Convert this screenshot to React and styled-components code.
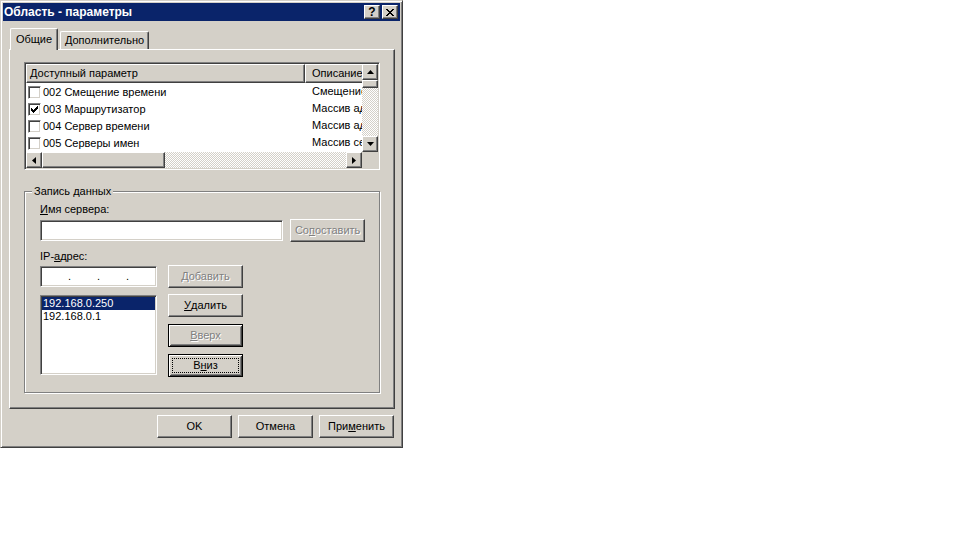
import React from "react";
import styled, { createGlobalStyle, css } from "styled-components";

const FACE = "#d4d0c8";

const GlobalStyle = createGlobalStyle`
  html, body {
    margin: 0;
    padding: 0;
    background: #fff;
  }
  body {
    font: 11px/13px "Liberation Sans", Arial, sans-serif;
    color: #000;
  }
  * {
    box-sizing: border-box;
  }
`;

// classic 3d edges
const raised = css`
  border: 1px solid;
  border-color: #fff #404040 #404040 #fff;
  box-shadow: inset -1px -1px #808080, inset 1px 1px ${FACE};
`;

const sunken = css`
  border: 1px solid;
  border-color: #808080 #fff #fff #808080;
  box-shadow: inset 1px 1px #404040, inset -1px -1px ${FACE};
`;

const Window = styled.div`
  width: 403px;
  height: 448px;
  padding: 2px;
  background: ${FACE};
  border: 1px solid;
  border-color: ${FACE} #404040 #404040 ${FACE};
  box-shadow: inset 1px 1px #fff, inset -1px -1px #808080;
  display: flex;
  flex-direction: column;
`;

const TitleBar = styled.div`
  height: 18px;
  background: #0a246a;
  display: flex;
  align-items: center;
  padding: 0 2px 0 1px;
`;

const TitleText = styled.div`
  flex: 1;
  color: #fff;
  font-weight: bold;
  font-size: 12px;
  white-space: nowrap;
`;

const CaptionButtons = styled.div`
  display: flex;
  gap: 2px;
`;

const CaptionButton = styled.div`
  width: 16px;
  height: 14px;
  background: ${FACE};
  ${raised};
  display: flex;
  align-items: center;
  justify-content: center;
  font-weight: bold;
  font-size: 12px;
  line-height: 12px;
`;

const Body = styled.div`
  flex: 1;
  padding: 7px 5px 0 6px;
  display: flex;
  flex-direction: column;
`;

const TabStrip = styled.div`
  display: flex;
  align-items: flex-end;
  height: 22px;
  margin-bottom: -1px;
  position: relative;
  z-index: 1;
`;

const Tab = styled.div`
  width: ${(p) => p.$w}px;
  height: ${(p) => (p.$active ? 22 : 18)}px;
  margin: 0 0 ${(p) => (p.$active ? 0 : 1)}px ${(p) => p.$ml}px;
  padding-bottom: ${(p) => (p.$active ? 1 : 0)}px;
  background: ${FACE};
  border-top: 1px solid #fff;
  border-left: 1px solid #fff;
  border-right: 1px solid #404040;
  border-radius: 2px 2px 0 0;
  box-shadow: inset -1px 0 #808080;
  display: flex;
  align-items: center;
  justify-content: center;
  white-space: nowrap;
`;

const Panel = styled.div`
  width: 386px;
  height: 360px;
  border: 1px solid;
  border-color: #fff #404040 #404040 #fff;
  box-shadow: inset -1px -1px #808080;
  padding: 12px 14px 0;
`;

const ListView = styled.div`
  width: 356px;
  height: 108px;
  ${sunken};
  padding: 1px;
  background: ${FACE};
  display: grid;
  grid-template-columns: 336px 16px;
  grid-template-rows: 88px 16px;
`;

const ListContent = styled.div`
  background: #fff;
  overflow: hidden;
  min-width: 0;
`;

const HeaderRow = styled.div`
  display: flex;
  height: 19px;
`;

const HeaderCell = styled.div`
  flex: 0 0 ${(p) => p.$w}px;
  ${raised};
  background: ${FACE};
  padding-left: ${(p) => p.$pad}px;
  line-height: 16px;
  white-space: nowrap;
  overflow: hidden;
`;

const Row = styled.div`
  display: flex;
  align-items: center;
  height: 17px;
  white-space: nowrap;
`;

const NameCell = styled.div`
  flex: 0 0 279px;
  display: flex;
  align-items: center;
  gap: 2px;
  padding: 1px 0 0 2px;
`;

const DescCell = styled.div`
  padding-left: 7px;
`;

const CheckBox = styled.span`
  width: 13px;
  height: 13px;
  flex: 0 0 13px;
  background: #fff;
  ${sunken};
  display: flex;
  align-items: center;
  justify-content: center;
`;

const ScrollBar = styled.div`
  display: flex;
  flex-direction: ${(p) => (p.$vertical ? "column" : "row")};
  min-width: 0;
  min-height: 0;
`;

const ArrowButton = styled.div`
  flex: 0 0 16px;
  width: 16px;
  height: 16px;
  background: ${FACE};
  ${raised};
  display: flex;
  align-items: center;
  justify-content: center;
`;

const Thumb = styled.div`
  flex: 0 0 ${(p) => p.$size}px;
  background: ${FACE};
  ${raised};
`;

const Track = styled.div`
  flex: 1;
  background-color: ${FACE};
  background-image: repeating-conic-gradient(#fff 0% 25%, transparent 0% 50%);
  background-size: 2px 2px;
`;

const Corner = styled.div`
  background: ${FACE};
`;

const Group = styled.fieldset`
  width: 356px;
  margin: 15px 0 0;
  padding: 5px 14px 15px 15px;
  min-width: 0;
  border: 1px solid #808080;
  box-shadow: inset 1px 1px #fff, 1px 1px #fff;
`;

const Legend = styled.legend`
  padding: 0 2px;
  margin-left: -8px;
  background: ${FACE};
`;

const FieldLabel = styled.div`
  margin-bottom: ${(p) => p.$mb}px;
  margin-top: ${(p) => p.$mt || 0}px;
`;

const FieldRow = styled.div`
  display: flex;
  align-items: ${(p) => (p.$top ? "flex-start" : "center")};
  gap: ${(p) => p.$gap}px;
  margin-top: ${(p) => p.$mt || 0}px;
`;

const TextBox = styled.div`
  width: ${(p) => p.$w}px;
  height: 21px;
  background: #fff;
  ${sunken};
`;

const IpBox = styled.div`
  width: 117px;
  height: 21px;
  background: #fff;
  ${sunken};
  padding: 1px;
  display: flex;
  align-items: flex-end;
  padding-bottom: 3px;
`;

const IpField = styled.span`
  width: 26px;
`;

const IpDot = styled.span`
  width: 3px;
  text-align: center;
  line-height: 13px;
`;

const ListBox = styled.div`
  width: 117px;
  height: 80px;
  margin-top: 1px;
  background: #fff;
  ${sunken};
  padding: 1px;
`;

const ListItem = styled.div`
  height: 13px;
  padding-left: 1px;
  background: ${(p) => (p.$selected ? "#0a246a" : "transparent")};
  color: ${(p) => (p.$selected ? "#fff" : "#000")};
  white-space: nowrap;
`;

const ButtonColumn = styled.div`
  display: flex;
  flex-direction: column;
  gap: 7px;
`;

const Button = styled.button`
  width: 75px;
  height: 23px;
  padding: 0;
  font: inherit;
  background: ${FACE};
  color: ${(p) => (p.disabled ? "#808080" : "#000")};
  text-shadow: ${(p) => (p.disabled ? "1px 1px #fff" : "none")};
  ${raised};
  display: flex;
  align-items: center;
  justify-content: center;
  ${(p) =>
    p.$default &&
    css`
      border: 1px solid #000;
      box-shadow: inset 1px 1px #fff, inset -1px -1px #404040,
        inset 2px 2px ${FACE}, inset -2px -2px #808080;
      padding: 2px;
    `}
`;

const FocusLabel = styled.span`
  flex: 1;
  align-self: stretch;
  margin: 1px;
  border: 1px dotted #000;
  display: flex;
  align-items: center;
  justify-content: center;
`;

const Footer = styled.div`
  display: flex;
  justify-content: flex-end;
  gap: 6px;
  margin-top: 6px;
  padding-right: 1px;
`;

const UpArrow = () => (
  <svg width="7" height="4" viewBox="0 0 7 4">
    <polygon points="3.5,0 7,4 0,4" fill="#000" />
  </svg>
);
const DownArrow = () => (
  <svg width="7" height="4" viewBox="0 0 7 4">
    <polygon points="0,0 7,0 3.5,4" fill="#000" />
  </svg>
);
const LeftArrow = () => (
  <svg width="4" height="7" viewBox="0 0 4 7">
    <polygon points="4,0 4,7 0,3.5" fill="#000" />
  </svg>
);
const RightArrow = () => (
  <svg width="4" height="7" viewBox="0 0 4 7">
    <polygon points="0,0 4,3.5 0,7" fill="#000" />
  </svg>
);

const CloseGlyph = () => (
  <svg width="8" height="7" viewBox="0 0 8 7" shapeRendering="crispEdges">
    <path
      d="M0 0h2v1h-2zM6 0h2v1h-2zM1 1h2v1h-2zM5 1h2v1h-2zM2 2h4v1h-4zM3 3h2v1h-2zM2 4h4v1h-4zM1 5h2v1h-2zM5 5h2v1h-2zM0 6h2v1h-2zM6 6h2v1h-2z"
      fill="#000"
    />
  </svg>
);

const CheckMark = () => (
  <svg width="7" height="7" viewBox="0 0 7 7" shapeRendering="crispEdges">
    <path
      d="M6 0h1v1h-1zM5 1h2v1h-2zM0 2h1v1h-1zM4 2h3v1h-3zM0 3h2v1h-2zM3 3h3v1h-3zM0 4h5v1h-5zM1 5h3v1h-3zM2 6h1v1h-1z"
      fill="#000"
    />
  </svg>
);

const options = [
  { name: "002 Смещение времени", desc: "Смещение времени", checked: false },
  { name: "003 Маршрутизатор", desc: "Массив адресов", checked: true },
  { name: "004 Сервер времени", desc: "Массив адресов", checked: false },
  { name: "005 Серверы имен", desc: "Массив серверов", checked: false },
];

export default function App() {
  return (
    <>
      <GlobalStyle />
      <Window>
        <TitleBar>
          <TitleText>Область - параметры</TitleText>
          <CaptionButtons>
            <CaptionButton>?</CaptionButton>
            <CaptionButton>
              <CloseGlyph />
            </CaptionButton>
          </CaptionButtons>
        </TitleBar>

        <Body>
          <TabStrip>
            <Tab $active $w={48} $ml={1}>
              Общие
            </Tab>
            <Tab $w={89} $ml={2}>
              Дополнительно
            </Tab>
          </TabStrip>

          <Panel>
            <ListView>
              <ListContent>
                <HeaderRow>
                  <HeaderCell $w={279} $pad={3}>
                    Доступный параметр
                  </HeaderCell>
                  <HeaderCell $w={120} $pad={6}>
                    Описание
                  </HeaderCell>
                </HeaderRow>
                {options.map((o) => (
                  <Row key={o.name}>
                    <NameCell>
                      <CheckBox>{o.checked && <CheckMark />}</CheckBox>
                      {o.name}
                    </NameCell>
                    <DescCell>{o.desc}</DescCell>
                  </Row>
                ))}
              </ListContent>
              <ScrollBar $vertical>
                <ArrowButton>
                  <UpArrow />
                </ArrowButton>
                <Thumb $size={8} />
                <Track />
                <ArrowButton>
                  <DownArrow />
                </ArrowButton>
              </ScrollBar>
              <ScrollBar>
                <ArrowButton>
                  <LeftArrow />
                </ArrowButton>
                <Thumb $size={123} />
                <Track />
                <ArrowButton>
                  <RightArrow />
                </ArrowButton>
              </ScrollBar>
              <Corner />
            </ListView>

            <Group>
              <Legend>Запись данных</Legend>
              <FieldLabel $mb={3}>
                <u>И</u>мя сервера:
              </FieldLabel>
              <FieldRow $gap={7}>
                <TextBox $w={244} />
                <Button disabled>
                  Со<u>п</u>оставить
                </Button>
              </FieldRow>

              <FieldLabel $mt={8} $mb={2}>
                IP-<u>а</u>дрес:
              </FieldLabel>
              <FieldRow $gap={11}>
                <IpBox>
                  <IpField />
                  <IpDot>.</IpDot>
                  <IpField />
                  <IpDot>.</IpDot>
                  <IpField />
                  <IpDot>.</IpDot>
                  <IpField />
                </IpBox>
                <Button disabled>
                  <u>Д</u>обавить
                </Button>
              </FieldRow>

              <FieldRow $gap={11} $mt={6} $top>
                <ListBox>
                  <ListItem $selected>192.168.0.250</ListItem>
                  <ListItem>192.168.0.1</ListItem>
                </ListBox>
                <ButtonColumn>
                  <Button>
                    <u>У</u>далить
                  </Button>
                  <Button disabled $default>
                    <u>В</u>верх
                  </Button>
                  <Button $default>
                    <FocusLabel>
                      В<u>н</u>из
                    </FocusLabel>
                  </Button>
                </ButtonColumn>
              </FieldRow>
            </Group>
          </Panel>

          <Footer>
            <Button>OK</Button>
            <Button>Отмена</Button>
            <Button>
              При<u>м</u>енить
            </Button>
          </Footer>
        </Body>
      </Window>
    </>
  );
}
